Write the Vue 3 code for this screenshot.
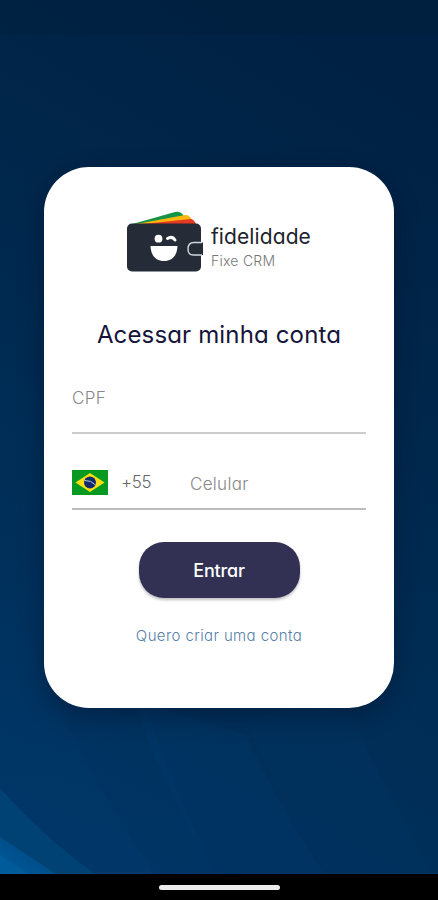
<script setup>
import { ref } from "vue";

const cpf = ref("");
const phone = ref("");
</script>

<template>
  <div class="screen">
    <svg class="rays" viewBox="0 0 438 874" preserveAspectRatio="none">
      <defs>
        <linearGradient id="base" x1="0.65" y1="0" x2="0.35" y2="1">
          <stop offset="0" stop-color="#002143" />
          <stop offset="0.3" stop-color="#00264a" />
          <stop offset="0.65" stop-color="#002d55" />
          <stop offset="1" stop-color="#003260" />
        </linearGradient>
        <linearGradient id="ray" x1="0" y1="0" x2="0" y2="1">
          <stop offset="0" stop-color="#004a86" stop-opacity="0" />
          <stop offset="1" stop-color="#004a86" stop-opacity="0.12" />
        </linearGradient>
        <linearGradient id="corner" x1="0" y1="1" x2="1" y2="0">
          <stop offset="0" stop-color="#005b9b" />
          <stop offset="1" stop-color="#00427a" />
        </linearGradient>
      </defs>
      <rect width="438" height="874" fill="url(#base)" />
      <rect width="438" height="35" fill="#001e38" fill-opacity="0.3" />
      <path d="M0 300C90 520 130 700 215 874H0Z" fill="url(#ray)" />
      <path d="M0 560C40 680 90 780 155 874H0Z" fill="url(#ray)" />
      <path d="M245 735C270 785 295 830 325 874H215C185 820 155 770 135 700Z" fill="#003a70" fill-opacity="0.25" />
      <path d="M340 690C370 760 405 820 432 874H325C300 825 270 780 245 720Z" fill="#003565" fill-opacity="0.3" />
      <path d="M0 788C30 822 62 850 95 874H0Z" fill="#004273" />
      <path d="M0 837L56 874H0Z" fill="url(#corner)" />
      <path d="M0 855L28 874H0Z" fill="#005b9b" />
    </svg>

    <main class="content">
      <form class="card" @submit.prevent>
        <div class="brand">
          <svg class="wallet" viewBox="0 0 78 62">
            <path d="M3 14L49 1Q53 0 56 2.500L64 14Z" fill="#159447" />
            <path d="M5 14L59 4Q62 3.500 64 6L70 14Z" fill="#f9b80e" />
            <path d="M7 14L65 8Q67 8 69 11L71 15Z" fill="#e63a20" />
            <rect x="1" y="12.500" width="74" height="48" rx="5" fill="#262b38" />
            <circle cx="32.500" cy="27.700" r="3.900" fill="#fff" />
            <path d="M41.500 27.500Q46 24.500 49 29" fill="none" stroke="#fff" stroke-width="3" stroke-linecap="round" />
            <path d="M24.500 35H51.500C51 45 46 50 38 50S25 45 24.500 35Z" fill="#fff" />
            <path d="M77 31.500H68Q62 31.500 62 38T68 44H77Z" fill="#262b38" />
            <path d="M76 31.500H68Q62 31.500 62 38T68 44H76" fill="none" stroke="#d4d7dd" stroke-width="1.400" />
          </svg>
          <div class="brand-text">
            <span class="brand-name">fidelidade</span>
            <span class="brand-sub">Fixe CRM</span>
          </div>
        </div>

        <h1>Acessar minha conta</h1>

        <div class="field cpf">
          <input type="text" v-model="cpf" placeholder="CPF" />
        </div>

        <div class="field phone">
          <svg class="flag" viewBox="0 0 36 25">
            <rect width="36" height="25" fill="#089a20" />
            <path d="M18 3L32.500 12.500L18 22L3.500 12.500Z" fill="#fadf14" />
            <circle cx="18" cy="12.500" r="6" fill="#12296f" />
            <path d="M12.500 10.500Q19 10 23.500 15" fill="none" stroke="#b8cbd8" stroke-width="1" />
          </svg>
          <span class="ddi">+55</span>
          <input type="tel" v-model="phone" placeholder="Celular" />
        </div>

        <button type="submit"><span>Entrar</span></button>
        <a class="signup">Quero criar uma conta</a>
      </form>
    </main>

    <div class="navbar"><div class="handle"></div></div>
  </div>
</template>

<style>
body {
  margin: 0;
}
</style>

<style scoped>
.screen {
  position: relative;
  display: flex;
  flex-direction: column;
  height: 900px;
  overflow: hidden;
  background: #00284d;
  font-family: Inter, "Liberation Sans", sans-serif;
  font-feature-settings: "cv11", "ss03";
}

.rays {
  position: absolute;
  top: 0;
  left: 0;
  width: 100%;
  height: 874px;
}

.content {
  position: relative;
  flex: 1;
  display: flex;
  align-items: center;
  justify-content: center;
}

.card {
  display: flex;
  flex-direction: column;
  align-items: center;
  box-sizing: border-box;
  width: 350px;
  height: 541px;
  padding: 44px 28px 0;
  border-radius: 45px;
  background: #fff;
  box-shadow: 0 8px 24px rgba(0, 12, 35, 0.4);
}

.brand {
  display: flex;
  align-self: flex-start;
  margin-left: 54px;
}

.wallet {
  width: 78px;
  height: 62px;
}

.brand-text {
  display: flex;
  flex-direction: column;
  padding: 12px 0 0 7px;
  white-space: nowrap;
}

.brand-name {
  font-size: 21px;
  line-height: 28px;
  letter-spacing: 0.1px;
  color: #20232c;
}

.brand-sub {
  font-size: 14px;
  line-height: 20px;
  font-weight: 300;
  letter-spacing: 0.25px;
  color: #777;
}

h1 {
  margin: 45px 0 0;
  font-size: 24px;
  font-weight: 400;
  line-height: 34px;
  letter-spacing: 0.15px;
  color: #15143a;
  white-space: nowrap;
}

.field {
  display: flex;
  align-items: center;
  box-sizing: border-box;
  width: 294px;
  border-bottom: 2px solid #ccc;
}

.field input {
  min-width: 0;
  padding: 0;
  border: none;
  outline: none;
  background: transparent;
  font: inherit;
  font-size: 17px;
  font-weight: 300;
  font-feature-settings: inherit;
  letter-spacing: 0.3px;
  color: #555;
}

.field input::placeholder {
  color: #888;
  opacity: 1;
}

.cpf {
  height: 82px;
  padding-top: 13px;
}

.phone {
  height: 76px;
  padding-top: 23px;
}

.field.phone {
  border-bottom-color: #bdbdbd;
}

.phone input {
  flex: 1;
  padding-top: 4px;
}

.flag {
  width: 36px;
  height: 25px;
}

.ddi {
  width: 69px;
  margin-left: 13px;
  font-size: 17px;
  font-weight: 300;
  letter-spacing: -0.3px;
  color: #666;
}

button {
  width: 161px;
  height: 56px;
  margin-top: 32px;
  padding: 2px 0 0;
  border: none;
  border-radius: 25px;
  background: #323153;
  box-shadow: 0 2px 3px rgba(0, 0, 0, 0.25);
  color: #fff;
  font: inherit;
  font-size: 18px;
  font-weight: 500;
  font-feature-settings: inherit;
  letter-spacing: -0.2px;
}

.signup {
  margin-top: 28px;
  font-size: 15px;
  font-weight: 300;
  line-height: 20px;
  letter-spacing: 0.4px;
  color: #557fa8;
  white-space: nowrap;
}

.navbar {
  position: relative;
  display: flex;
  align-items: center;
  justify-content: center;
  height: 26px;
  background: #000;
}

.handle {
  width: 121px;
  height: 5px;
  border-radius: 3px;
  background: #ececec;
}
</style>
